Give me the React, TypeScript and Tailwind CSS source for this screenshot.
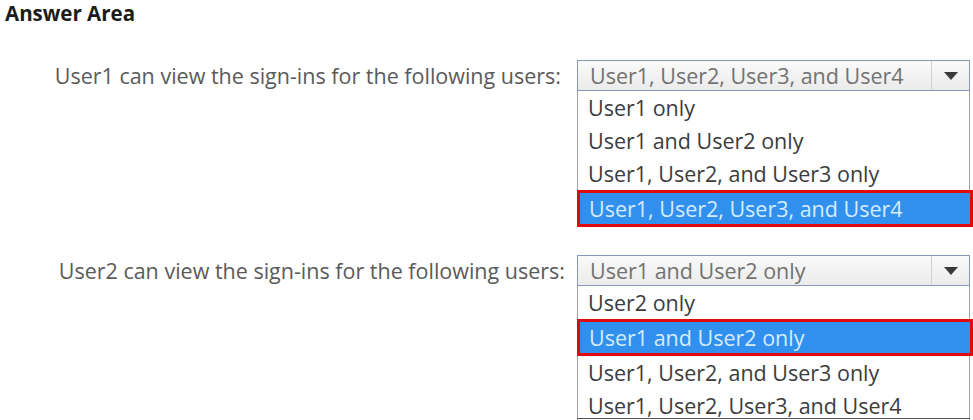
import React from 'react';

type Question = {
  label: string;
  selected: string;
  options: string[];
  answer: string;
};

const questions: Question[] = [
  {
    label: 'User1 can view the sign-ins for the following users:',
    selected: 'User1, User2, User3, and User4',
    options: ['User1 only', 'User1 and User2 only', 'User1, User2, and User3 only', 'User1, User2, User3, and User4'],
    answer: 'User1, User2, User3, and User4',
  },
  {
    label: 'User2 can view the sign-ins for the following users:',
    selected: 'User1 and User2 only',
    options: ['User2 only', 'User1 and User2 only', 'User1, User2, and User3 only', 'User1, User2, User3, and User4'],
    answer: 'User1 and User2 only',
  },
];

function Dropdown({ q }: { q: Question }) {
  return (
    <div className="w-[396px]">
      {/* closed select */}
      <div className="flex h-[31px] w-[393px] border border-[#8797b8] bg-gradient-to-b from-[#fafafa] to-[#ebebeb]">
        <div className="flex-1 pl-[12px] text-[21.5px] leading-[29px] text-[#727272]">{q.selected}</div>
        <div className="flex w-[38px] items-center justify-center border-l border-[#d0d0d0]">
          <svg width="14" height="8" viewBox="0 0 14 8">
            <path d="M0 0 L14 0 L7 8 Z" fill="#3a3a3a" />
          </svg>
        </div>
      </div>
      {/* option list */}
      <div className="w-[393px] border-x border-[#a0a0a0] bg-white">
        {q.options.map((opt) =>
          opt === q.answer ? (
            <div
              key={opt}
              className="-mx-[1px] h-[37px] w-[396px] border-[3px] border-[#e00a0a] bg-[#3190ee] pl-[9px] text-[21.5px] leading-[31px] text-[#d6ebff]"
            >
              {opt}
            </div>
          ) : (
            <div key={opt} className="h-[33px] pl-[10px] text-[21.5px] leading-[33px] text-[#3c3c3c]">
              {opt}
            </div>
          )
        )}
      </div>
    </div>
  );
}

export default function App() {
  return (
    <div className="relative h-[420px] w-[973px] overflow-hidden bg-white font-['Open_Sans',sans-serif]">
      <div className="pl-[5px] pt-0 text-[20.5px] font-bold leading-[26px] text-[#1c1c1c]">Answer Area</div>

      <div className="mt-[34px] flex flex-col gap-[28px]">
        {questions.map((q, i) => (
          <div key={q.label} className="flex">
            <div
              className={
                i === 0
                  ? 'w-[577px] pr-[16px] text-right text-[21.5px] leading-[31px] text-[#5a5a5a]'
                  : 'w-[577px] pr-[12px] text-right text-[21.5px] leading-[31px] text-[#5a5a5a]'
              }
            >
              {q.label}
            </div>
            <Dropdown q={q} />
          </div>
        ))}
      </div>

      <div className="absolute bottom-[1px] left-[577px] h-[1px] w-[393px] bg-[#555]" />
    </div>
  );
}
